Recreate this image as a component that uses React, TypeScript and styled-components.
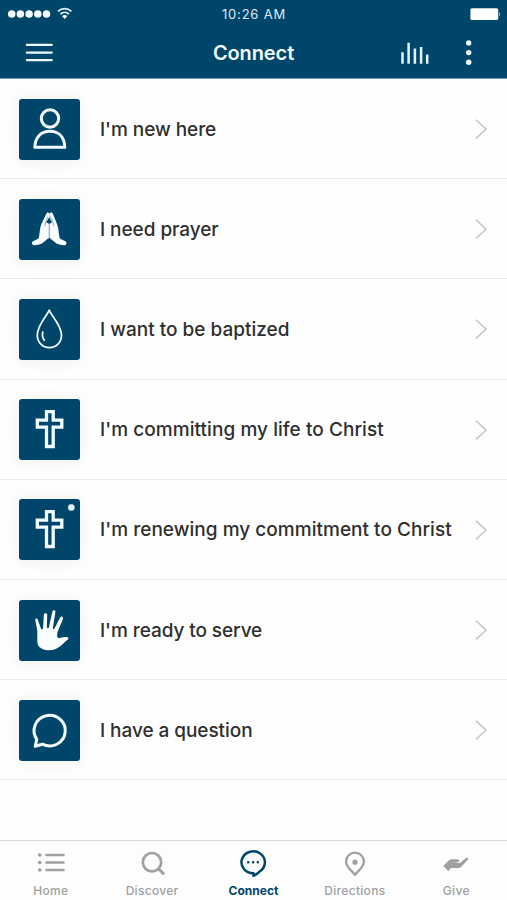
import React from "react";
import styled, { createGlobalStyle } from "styled-components";

const NAVY = "#00466b";

const GlobalStyle = createGlobalStyle`
  * { box-sizing: border-box; }
  html, body { margin: 0; background: #fff; }
  body { font-family: Inter, "Liberation Sans", sans-serif; overflow: hidden; }
  svg { display: block; flex: none; }
`;

const Screen = styled.div`
  width: 507px;
  height: 900px;
  display: flex;
  flex-direction: column;
  background: #fefefe;
`;

const Header = styled.header`
  height: 79px;
  flex: none;
  background: ${NAVY};
  color: #f2fbff;
  border-bottom: 1px solid #6f9bb0;
`;

const StatusBar = styled.div`
  height: 27px;
  display: grid;
  grid-template-columns: 1fr auto 1fr;
  align-items: center;
  padding: 0 6px 0 7px;
  & > :last-child { justify-self: end; }
`;

const Clock = styled.time`
  padding-top: 1px;
  font-size: 13px;
  line-height: 15px;
  letter-spacing: 0.8px;
  color: #dcecf4;
`;

const NavBar = styled.div`
  height: 51px;
  display: grid;
  grid-template-columns: 1fr auto 1fr;
  align-items: center;
  padding: 0 34px 0 25px;
`;

const Title = styled.h1`
  margin: 0 0 0 9px;
  font-size: 20px;
  line-height: 24px;
  font-weight: 600;
  letter-spacing: -0.1px;
`;

const NavActions = styled.div`
  display: flex;
  align-items: center;
  justify-content: flex-end;
  gap: 35px;
`;

const List = styled.ul`
  margin: 0;
  padding: 0;
  list-style: none;
  flex: 1;
`;

const Row = styled.li`
  height: 100.2px;
  display: flex;
  align-items: center;
  padding: 1px 20px 0 19px;
  border-bottom: 1px solid #e9e9e9;
`;

const Tile = styled.div`
  width: 61px;
  height: 61px;
  flex: none;
  border-radius: 3px;
  background: ${NAVY};
  box-shadow: 0 1px 16px rgba(0, 0, 0, 0.07);
`;

const Label = styled.span<{ $spacing: number }>`
  flex: 1;
  margin-left: 20px;
  padding-top: 1px;
  font-size: 19px;
  line-height: 24px;
  font-weight: 500;
  letter-spacing: ${(p) => p.$spacing}px;
  color: #2f2f2f;
  white-space: nowrap;
`;

const TabBar = styled.nav`
  height: 60px;
  flex: none;
  display: grid;
  grid-template-columns: repeat(5, 1fr);
  border-top: 1px solid #dcdcdc;
  background: #fdfdfd;
`;

const Tab = styled.div<{ $active?: boolean }>`
  display: flex;
  flex-direction: column;
  align-items: center;
  padding-top: 5px;
  gap: 5px;
  color: ${(p) => (p.$active ? NAVY : "#a0a0a0")};
  font-size: 12px;
  line-height: 16px;
  font-weight: ${(p) => (p.$active ? 700 : 500)};
  letter-spacing: ${(p) => (p.$active ? 0 : 0.3)}px;
`;

const Cross = () => (
  <path
    d="M36.5 21.7h6.7v8.4h8.6v7.1h-8.6v19.3h-6.7V37.2h-9.2v-7.1h9.2z"
    strokeWidth="3.3"
  />
);

const Glyphs: Record<string, React.ReactNode> = {
  person: (
    <g strokeWidth="3" strokeLinejoin="round">
      <circle cx="40" cy="28.5" r="8.7" />
      <path d="M24.8 57.2C25.2 47.2 31 41.3 40 41.3S54.4 47.2 54.8 57.2z" />
    </g>
  ),
  prayer: (
    <g stroke="none" fill="#f7fdff">
      <path d="M39.2 31.5V47.8C36 50 33 53.6 29.2 54.6L25 55.3C21.8 55.3 20.9 52.2 23.5 50.9L28.6 48.5C30 43.5 29.5 38.8 31.2 34.5L36.1 24.2C36.8 21.8 39.6 22.2 39.2 25z" />
      <path d="M39.2 31.5V47.8C42.4 50 45.4 53.6 49.2 54.6L53.4 55.3C56.9 55.3 57.6 52.2 54.9 50.9L49.8 48.5C48.4 43.5 48.9 38.8 47.2 34.5L43.1 24.2C42.4 21.8 38.8 22.2 39.2 25z" />
      <path d="M37.9 26.5 35.8 31.5 34.8 36M40.5 26.5 42.6 31.5 43.6 36M39.2 33v15" fill="none" stroke="#52829c" strokeWidth=".65" />
      <path d="M39.2 27.2 42 32.2 40.2 33.5h-2l-2-1.3z" fill={NAVY} />
    </g>
  ),
  drop: (
    <g strokeWidth="1.75" strokeLinejoin="round" strokeLinecap="round">
      <path d="M39.2 20.2C36 27.7 27.3 34.8 27.3 45.6A12.1 12.1 0 0 0 51.5 45.6C51.5 34.8 42.4 27.7 39.2 20.2z" />
      <path d="M32.7 42.2c-.5 3.4-.2 6 1.6 8" />
    </g>
  ),
  cross: <Cross />,
  renewed: (
    <>
      <Cross />
      <circle cx="61.3" cy="17.5" r="3.2" fill="#e3f6fc" stroke="#9ccbdc" strokeWidth=".5" />
    </>
  ),
  hand: (
    <path
      stroke="none"
      fill="#f8fdff"
      d="M27.3 39.5 25.3 29.2C25 27.4 27.1 27 27.7 28.6L31.3 38.5 33 37.8 33.8 24C34 21.5 37.2 21.6 37.2 24L36.9 37 38.7 37 42.4 20.4C43 18.4 45.8 18.9 45.4 21L42.8 37.5 44.1 38.2 50.1 26.4C51.1 24.5 53.8 25.8 53 27.9L47.7 40.5C46.6 44.4 47 47 49.2 47.2 51.2 47 52.8 46 55.1 46.1 57.6 45.5 59.3 46.5 58 48.4 54.9 50.1 53.4 53.2 49.8 55.5 45.4 58.9 41.7 59.6 37.2 59.2 30.6 58.4 27.4 55.3 27.3 50.5z"
    />
  ),
  question: (
    <path
      d="M26.8 48.3 25.2 55.3 32.4 53.2A15.6 15.3 0 1 0 26.8 48.3z"
      strokeWidth="3"
      strokeLinejoin="round"
    />
  ),
};

const rows = [
  { glyph: "person", text: "I'm new here", spacing: -0.06 },
  { glyph: "prayer", text: "I need prayer", spacing: -0.06 },
  { glyph: "drop", text: "I want to be baptized", spacing: 0 },
  { glyph: "cross", text: "I'm committing my life to Christ", spacing: 0.06 },
  { glyph: "renewed", text: "I'm renewing my commitment to Christ", spacing: 0.03 },
  { glyph: "hand", text: "I'm ready to serve", spacing: -0.08 },
  { glyph: "question", text: "I have a question", spacing: -0.06 },
];

const tabs = [
  {
    label: "Home",
    icon: (
      <g fill="none" stroke="currentColor" strokeWidth="2.5" strokeLinecap="round">
        <path d="M12.5 9h17M12.5 16.5h17M12.5 24h17" />
        <path d="M5.7 9h.1M5.7 16.5h.1M5.7 24h.1" strokeWidth="3.6" />
      </g>
    ),
  },
  {
    label: "Discover",
    icon: (
      <g fill="none" stroke="currentColor" strokeWidth="2.7" strokeLinecap="round">
        <circle cx="17" cy="16.2" r="9.2" />
        <path d="m23.8 23 4.4 4.4" strokeWidth="3" />
      </g>
    ),
  },
  {
    label: "Connect",
    active: true,
    icon: (
      <g fill="none" stroke="currentColor" strokeWidth="2.5" strokeLinejoin="round">
        <path d="M17.5 27.2A11.7 10.9 0 1 1 24.4 24.9C22.6 26.8 20.4 28.6 17.4 29.8z" />
        <path d="M12.2 16.2h.1M17 16.2h.1M21.8 16.2h.1" strokeWidth="2.5" strokeLinecap="round" />
      </g>
    ),
  },
  {
    label: "Directions",
    icon: (
      <g fill="none" stroke="currentColor" strokeWidth="2.3" strokeLinejoin="round">
        <path d="M17 28.8C13.7 24.4 8.1 21.3 8.1 15.4A8.9 8.7 0 0 1 25.9 15.4C25.9 21.3 20.3 24.4 17 28.8z" />
        <circle cx="17" cy="16.2" r="2.6" fill="currentColor" stroke="none" />
      </g>
    ),
  },
  {
    label: "Give",
    icon: (
      <path
        fill="currentColor"
        d="M4.4 19.9 8.8 15.2C10.3 13.4 12 13.2 14 13.2H18.8C20.8 13.3 20.8 15.6 19 15.9L15.4 16.4 20.8 16.9 26.8 12.2C28.7 11.1 30 12.6 28.7 14L22.5 20.4C21.5 21.6 20.5 22 18.9 22H13.2C11.8 22.1 10.6 23.2 9.4 25.2z"
      />
    ),
  },
];

export default function App() {
  return (
    <Screen>
      <GlobalStyle />
      <Header>
        <StatusBar>
          <svg width="68" height="20" viewBox="7 4 68 20" fill="#f4fcff">
            {[11.7, 20.4, 29.1, 37.8, 46.5].map((x) => (
              <circle key={x} cx={x} cy="14" r="3.75" />
            ))}
            <g fill="none" stroke="#e5f5fc" strokeWidth="1.8">
              <path d="M58 11.3c3.9-3.6 9.5-3.6 13.4 0M60.4 14.1c2.5-2.3 6.1-2.3 8.6 0" />
            </g>
            <path d="M62 16.1q2.7-2 5.4 0l-2.7 2.8z" />
          </svg>
          <Clock>10:26 AM</Clock>
          <svg width="32" height="14" viewBox="0 0 32 14" fill="#fff">
            <rect x="1.4" y="1.2" width="27.8" height="11.8" rx="1.6" />
            <path d="M30 5q2 2.1 0 4.2z" fill="#b2d0df" />
          </svg>
        </StatusBar>
        <NavBar>
          <svg width="28" height="24" viewBox="0 0 28 24" stroke="#edfaff" strokeWidth="2.1" strokeLinecap="round">
            <path d="M1.8 3.9h25M1.8 11.6h25M1.8 19.1h25" />
          </svg>
          <Title>Connect</Title>
          <NavActions>
            <svg width="30" height="24" viewBox="0 0 30 24" stroke="#e1f4fc" strokeWidth="2.5">
              <path d="M2.5 11.3v11.4M8.6 1.8v20.9M14.9 7.5v15.2M21.1 6v16.7M27.2 13.4v9.3" />
            </svg>
            <svg width="8" height="26" viewBox="0 0 8 26" fill="#f4fcff">
              <circle cx="3.7" cy="2.9" r="2.7" />
              <circle cx="3.7" cy="12.6" r="2.7" />
              <circle cx="3.7" cy="22.3" r="2.7" />
            </svg>
          </NavActions>
        </NavBar>
      </Header>
      <List>
        {rows.map((row) => (
          <Row key={row.text}>
            <Tile>
              <svg width="61" height="61" viewBox="9 9 61 61" fill="none" stroke="#f2fcff">
                {Glyphs[row.glyph]}
              </svg>
            </Tile>
            <Label $spacing={row.spacing}>{row.text}</Label>
            <svg width="12" height="20" viewBox="0 0 12 20" fill="none" stroke="#c5c5c5" strokeWidth="1.5">
              <path d="m1 .8 10 9.4-10 9.2" />
            </svg>
          </Row>
        ))}
      </List>
      <TabBar>
        {tabs.map((tab) => (
          <Tab key={tab.label} $active={tab.active}>
            <svg width="34" height="32" viewBox="0 0 34 32">
              {tab.icon}
            </svg>
            {tab.label}
          </Tab>
        ))}
      </TabBar>
    </Screen>
  );
}
